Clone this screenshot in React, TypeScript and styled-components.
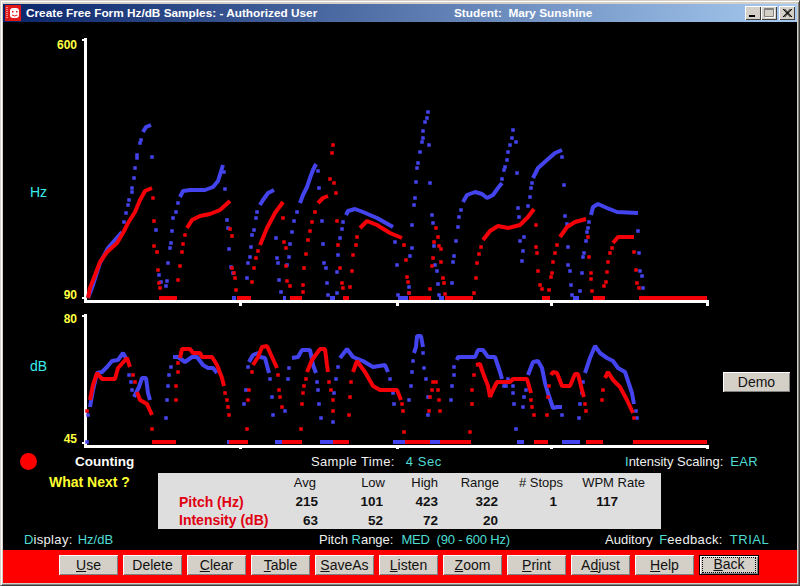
import React from "react";
import styled, { createGlobalStyle } from "styled-components";

const GlobalStyle = createGlobalStyle`
  html, body { margin: 0; padding: 0; background: #000; }
  body { font-family: "Liberation Sans", Arial, sans-serif; }
`;

const BLUE = "#4444ee";
const RED = "#f40008";
const CYAN = "#4fdcd4";

type Trace = { lines: string[]; bars: string[]; dots: string };

const hzBlue: Trace = {
  lines: [
    "88,298 93,285 100,263 108,248 115,240 122,232",
    "143,132 146,127 151,125",
    "180,197 183,191 190,190 205,190 213,187 218,181 223,165",
    "260,205 263,200 268,193 274,190",
    "300,203 303,195 307,187 310,178 313,170 316,164",
    "346,215 348,211 355,209 363,212 377,218 393,227",
    "463,202 467,195 475,192 482,194 487,198 493,195 498,188 502,183",
    "533,178 538,168 547,160 555,153 562,150",
    "591,215 593,207 598,204 607,208 617,212 638,213",
  ],
  bars: ["232,298 236,298", "283,298 286,298", "330,298 335,298", "398,298 408,298", "439,298 444,298", "573,298 579,298"],
  dots:
    "124,222 126,213 128,205 129,200 132,192 132,188 134,178 135,168 137,158 137,155 140,143 141,140 " +
    "152,157 156,230 159,275 161,282 166,286 167,281 168,263 170,248 171,243 172,231 173,218 176,212 178,203 " +
    "224,172 225,189 227,220 228,228 229,249 231,267 233,273 247,278 248,263 250,257 251,247 252,235 254,230 256,218 257,212 " +
    "276,238 277,258 278,263 279,280 281,292 287,265 289,257 290,244 292,232 294,221 297,212 " +
    "318,171 319,188 322,221 323,244 324,263 326,268 327,283 328,295 337,293 337,272 338,255 340,238 342,229 343,222 " +
    "395,242 397,265 398,295 409,287 409,293 410,256 412,248 412,225 414,205 415,198 416,182 417,168 418,163 420,152 422,142 423,138 423,131 425,122 427,118 428,112 " +
    "429,145 430,183 432,215 433,223 434,246 435,265 437,271 438,284 439,295 452,283 453,262 454,256 456,241 458,227 459,217 461,210 " +
    "502,179 504,170 505,167 507,160 508,152 510,145 512,138 513,130 516,142 517,173 518,208 519,217 520,241 524,237 523,251 522,261 " +
    "528,206 530,197 531,188 532,183 562,157 564,185 565,216 567,224 568,247 568,265 570,271 571,285 572,295 " +
    "580,291 582,273 583,257 584,253 586,241 587,232 588,228 589,222 638,231 639,253 640,271 642,276 643,288",
};

const hzRed: Trace = {
  lines: [
    "88,298 90,288 95,275 100,262 107,252 117,243 123,233 128,223 135,212 140,200 145,191 152,188",
    "187,228 192,220 200,216 210,214 220,210 230,201",
    "260,245 267,228 275,213 283,202",
    "318,203 323,198 328,196",
    "360,228 367,221 377,225 390,233 402,238",
    "483,240 490,231 498,226 508,228 520,225 528,217 534,209",
    "560,237 567,227 575,222 586,219",
    "613,243 618,237 634,237",
  ],
  bars: [
    "159,298 177,298", "237,298 251,298", "290,298 302,298", "343,298 349,298", "409,298 431,298",
    "445,298 473,298", "542,298 550,298", "593,298 605,298", "639,298 707,298",
  ],
  dots:
    "153,198 154,221 154,246 157,252 158,270 159,283 160,288 178,280 180,266 182,252 183,244 185,235 " +
    "230,229 232,236 232,268 234,273 235,278 236,290 252,282 254,268 256,258 258,251 " +
    "283,218 284,242 286,248 286,266 287,281 290,286 303,292 303,285 304,268 306,254 308,240 310,231 312,222 315,212 " +
    "332,153 333,145 330,179 334,183 336,193 337,221 338,245 340,268 342,283 343,288 " +
    "350,287 352,271 353,255 356,245 357,237 404,245 406,260 407,277 408,282 409,293 " +
    "430,289 432,266 433,258 434,242 436,228 438,237 439,246 441,249 441,262 443,278 444,283 445,294 " +
    "474,293 476,278 477,263 479,254 481,247 536,225 536,247 537,253 538,271 540,285 542,289 " +
    "549,290 551,277 552,273 553,262 555,253 557,245 588,237 589,257 591,273 591,279 592,291 " +
    "604,286 606,282 607,272 608,262 610,253 612,248 634,252 636,270 637,283 639,288",
};

const dbBlue: Trace = {
  lines: [
    "90,407 93,390 97,373 102,372 107,367 112,361 118,360 123,353 127,360",
    "134,397 139,387 142,378 146,378 148,393 150,400",
    "173,357 178,357 185,362 192,357 197,357 203,365 208,368 213,368 217,373",
    "249,362 253,355 258,353 260,357 265,358 269,373",
    "292,358 298,357 302,350 310,350 313,365 316,373",
    "340,358 347,349 353,357 363,361 373,367 385,365 388,372",
    "414,353 416,347 417,336 421,336 423,347",
    "457,360 458,357 475,357 478,350 483,350 488,357 495,357 500,372 502,379",
    "528,375 533,362 538,361 542,368 545,383 548,393 553,408 557,407 562,407",
    "585,373 590,358 595,346 600,353 607,358 613,361 618,368 625,372 632,393 634,404",
  ],
  bars: [
    "227,442 231,442", "275,442 282,442", "320,442 333,442", "393,442 405,442", "430,442 440,442",
    "517,442 524,442", "562,442 580,442",
  ],
  dots:
    "87,442 88,415 129,375 131,382 132,390 166,418 167,400 168,386 169,375 171,367 " +
    "244,404 246,390 248,367 270,379 272,397 273,415 285,411 288,379 289,368 " +
    "317,382 318,390 319,404 321,418 333,422 334,393 336,379 338,367 390,379 393,393 394,404 " +
    "409,400 411,386 412,372 413,361 423,353 424,368 426,379 428,397 428,415 " +
    "451,400 452,386 454,375 454,367 504,386 506,386 508,379 513,386 513,393 514,404 516,429 " +
    "523,407 524,397 526,390 562,415 579,418 580,404 582,393 583,382 636,411 637,418",
};

const dbRed: Trace = {
  lines: [
    "90,400 93,385 97,373 102,379 115,379 118,368 127,358 130,367",
    "137,392 140,400 147,404 152,415",
    "180,358 182,349 190,349 193,353 200,353 202,357 212,357 217,365 222,378 224,386",
    "253,365 258,357 262,347 267,346 272,357 277,368",
    "307,372 312,360 320,349 325,349 327,365 328,372",
    "353,372 357,361 365,372 373,386 380,390 397,390 401,400",
    "476,365 480,364 483,373 488,386 490,397 493,390 497,382 510,382 513,379 527,379 531,393",
    "551,375 553,372 557,373 562,386 570,386 575,374 578,374 582,390 584,397",
    "605,378 608,372 613,380 620,387 627,400 633,413",
  ],
  bars: [
    "152,442 176,442", "229,442 248,442", "282,442 302,442", "333,442 349,442", "405,442 430,442",
    "440,442 471,442", "534,442 548,442", "586,442 603,442", "633,442 707,442",
  ],
  dots:
    "87,411 133,375 135,382 152,429 176,400 176,386 178,372 178,363 225,393 227,400 228,407 229,415 " +
    "247,429 248,400 249,390 252,372 278,375 279,390 280,397 282,407 301,429 302,404 303,393 304,386 306,379 " +
    "329,382 331,390 333,400 333,411 349,415 350,397 351,382 402,404 403,411 404,432 " +
    "429,411 430,397 432,390 433,382 436,382 438,390 439,400 440,411 470,432 472,404 472,390 474,375 " +
    "531,400 532,407 534,415 547,415 548,397 549,386 585,404 586,411 602,400 603,390 634,418",
};

const Window = styled.div`
  width: 800px;
  height: 586px;
  box-sizing: border-box;
  display: flex;
  flex-direction: column;
  background: #d4d0c8;
  border-top: 1px solid #d4d0c8;
  border-left: 1px solid #d4d0c8;
  border-right: 1px solid #404040;
  border-bottom: 1px solid #404040;
  box-shadow: inset 1px 1px 0 #fff, inset -1px -1px 0 #808080;
  padding: 3px 2px 2px 2px;
  overflow: hidden;
`;

const TitleBar = styled.div`
  height: 18px;
  flex: none;
  display: flex;
  align-items: center;
  padding-left: 2px;
  background: linear-gradient(90deg, #0a246a 0%, #a6caf0 100%);
  color: #fff;
  font-size: 11.8px;
  font-weight: bold;
  white-space: nowrap;
`;

const TitleText = styled.span<{ $width: number }>`
  width: ${(p) => p.$width}px;
  margin-left: 5px;
  flex: none;
`;

const WindowButtons = styled.div`
  margin-left: auto;
  display: flex;
  margin-right: 2px;
`;

const WindowButton = styled.div<{ $gap?: number }>`
  width: 16px;
  height: 14px;
  margin-left: ${(p) => p.$gap ?? 0}px;
  background: #d4d0c8;
  box-shadow: inset 1px 1px 0 #fff, inset -1px -1px 0 #404040;
  display: flex;
  align-items: center;
  justify-content: center;
`;

const Canvas = styled.div`
  flex: 1;
  background: #000;
  display: flex;
  flex-direction: column;
  padding-top: 14px;
  min-height: 0;
`;

const ChartRow = styled.div`
  display: flex;
  flex: none;
`;

const AxisColumn = styled.div`
  width: 77px;
  flex: none;
  display: flex;
  flex-direction: column;
`;

const AxisValue = styled.div<{ $top: number }>`
  margin-top: ${(p) => p.$top}px;
  height: 14px;
  line-height: 14px;
  padding-right: 3px;
  text-align: right;
  color: #ffff40;
  font-size: 12px;
  font-weight: bold;
`;

const AxisUnit = styled.div<{ $top: number }>`
  margin-top: ${(p) => p.$top}px;
  height: 16px;
  line-height: 16px;
  padding-left: 27px;
  color: #38ecec;
  font-size: 14px;
`;

const ChartSvg = styled.svg`
  display: block;
  flex: none;
`;

const DemoSlot = styled.div`
  margin: 66px 0 0 11px;
`;

const Win95Button = styled.button<{ $w: number; $focused?: boolean }>`
  width: ${(p) => p.$w}px;
  height: 20px;
  padding: 0;
  border: none;
  flex: none;
  font-family: "Liberation Sans", Arial, sans-serif;
  font-size: 14px;
  color: #111;
  background: #d4d0c8;
  box-shadow: ${(p) =>
    p.$focused
      ? "inset 0 0 0 1px #000, inset 2px 2px 0 #fff, inset -2px -2px 0 #808080"
      : "inset 1px 1px 0 #fff, inset -1px -1px 0 #808080"};
`;

const FocusRing = styled.span`
  display: block;
  margin: 3px 4px;
  height: 14px;
  line-height: 13px;
  box-sizing: border-box;
  outline: 1px dotted #000;
`;

const InfoRow = styled.div<{ $h: number }>`
  display: flex;
  align-items: center;
  height: ${(p) => p.$h}px;
  flex: none;
  font-size: 13px;
  color: #f0f0f0;
  white-space: nowrap;
`;

const Cell = styled.div<{ $w: number }>`
  width: ${(p) => p.$w}px;
  flex: none;
  display: flex;
  align-items: center;
  white-space: pre;
`;

const RecordDot = styled.div`
  width: 17px;
  height: 17px;
  margin-left: 17px;
  border-radius: 50%;
  background: #f00;
`;

const Strong = styled.span<{ $color: string }>`
  color: ${(p) => p.$color};
  font-size: 13.5px;
  font-weight: bold;
`;

const Hot = styled.span`
  color: ${CYAN};
`;

const Wide = styled.span`
  letter-spacing: 0.35px;
`;

const Value = styled.span<{ $gap: number; $spacing?: number }>`
  color: ${CYAN};
  margin-left: ${(p) => p.$gap}px;
  letter-spacing: ${(p) => p.$spacing ?? 0}px;
`;

const MiddleRow = styled.div`
  display: flex;
  flex: none;
  height: 56px;
`;

const WhatNext = styled.div`
  width: 155px;
  flex: none;
  padding: 2px 0 0 46px;
  box-sizing: border-box;
  font-size: 14px;
  line-height: 15px;
  color: #ffff30;
  font-weight: bold;
`;

const StatsTable = styled.div`
  width: 503px;
  height: 56px;
  flex: none;
  box-sizing: border-box;
  padding-left: 21px;
  background: #dedede;
  display: grid;
  grid-template-columns: 89px 50px 67px 53px 61px 64px 82px;
  grid-template-rows: 19px 19px 18px;
  align-items: center;
  font-size: 13px;
  color: #111;
`;

const RowLabel = styled.div`
  color: #e00010;
  font-size: 14px;
  font-weight: bold;
  white-space: nowrap;
`;

const StatCell = styled.div<{ $bold?: boolean; $inset?: number }>`
  text-align: right;
  padding-right: ${(p) => p.$inset ?? 0}px;
  font-size: ${(p) => (p.$bold ? 13.5 : 13)}px;
  font-weight: ${(p) => (p.$bold ? "bold" : "normal")};
`;

const Toolbar = styled.div`
  height: 33px;
  flex: none;
  background: #f00;
  display: flex;
  align-items: flex-start;
  gap: 5px;
  padding: 5px 0 0 56px;
  box-sizing: border-box;
`;

const Mnemonic = styled.u`
  text-decoration: underline;
`;

function Trace({ trace, color }: { trace: Trace; color: string }) {
  const dots = trace.dots.split(" ").map((p) => p.split(",").map(Number));
  return (
    <g>
      {trace.lines.map((pts) => (
        <polyline key={pts} points={pts} fill="none" stroke={color} strokeWidth={4} strokeLinejoin="bevel" />
      ))}
      {trace.bars.map((pts) => (
        <polyline key={pts} points={pts} fill="none" stroke={color} strokeWidth={4} shapeRendering="crispEdges" />
      ))}
      {dots.map(([x, y], i) => (
        <rect key={i} x={x - 1.75} y={y - 1.75} width={3.5} height={3.5} fill={color} />
      ))}
    </g>
  );
}

function Axes({ top, bottom, left }: { top: number; bottom: number; left: number }) {
  return (
    <g fill="#fff" shapeRendering="crispEdges">
      <rect x={84} y={top} width={3} height={bottom - top + 3} />
      <rect x={left} y={top + 1} width={3} height={2} />
      <rect x={left} y={bottom - 3} width={3} height={2} />
      <rect x={84} y={bottom} width={624} height={3} />
      {[240, 397, 551, 707].map((x) => (
        <rect key={x} x={x - 1} y={bottom} width={3} height={6} />
      ))}
    </g>
  );
}

const buttons: { pre?: string; key: string; post: string }[] = [
  { key: "U", post: "se" },
  { pre: "Delete", key: "", post: "" },
  { key: "C", post: "lear" },
  { key: "T", post: "able" },
  { key: "S", post: "aveAs" },
  { key: "L", post: "isten" },
  { key: "Z", post: "oom" },
  { key: "P", post: "rint" },
  { pre: "A", key: "d", post: "just" },
  { key: "H", post: "elp" },
];

export default function App() {
  return (
    <Window>
      <GlobalStyle />
      <TitleBar>
        <svg width="16" height="16" viewBox="0 0 16 16">
          <rect width="16" height="16" fill="#e01818" />
          <rect x="5" y="3" width="9" height="10" rx="3" fill="#fff" />
          <rect x="7" y="6" width="1.5" height="1.5" fill="#e01818" />
          <rect x="11" y="6" width="1.5" height="1.5" fill="#e01818" />
          <path d="M7 10 Q9.5 12 12.5 10" stroke="#e01818" fill="none" />
          <path d="M2 2v12" stroke="#fff" strokeDasharray="1 1" />
        </svg>
        <TitleText $width={428}>Create Free Form Hz/dB Samples: - Authorized User</TitleText>
        <span>Student:&nbsp; Mary Sunshine</span>
        <WindowButtons>
          <WindowButton>
            <svg width="16" height="14" viewBox="0 0 16 14">
              <rect x="4" y="9" width="6" height="2" fill="#000" />
            </svg>
          </WindowButton>
          <WindowButton>
            <svg width="16" height="14" viewBox="0 0 16 14">
              <path d="M3.5 2.5h9v8h-9z M3.5 3.5h9" fill="none" stroke="#808080" />
              <path d="M4 11.5h9.5V3.5" fill="none" stroke="#fff" />
            </svg>
          </WindowButton>
          <WindowButton $gap={2}>
            <svg width="16" height="14" viewBox="0 0 16 14">
              <path d="M4 3l7.5 8M5.5 3l7.5 8M11.5 3L4 11M13 3l-7.5 8" stroke="#000" fill="none" />
            </svg>
          </WindowButton>
        </WindowButtons>
      </TitleBar>

      <Canvas>
        <ChartRow>
          <AxisColumn>
            <AxisValue $top={2}>600</AxisValue>
            <AxisUnit $top={132}>Hz</AxisUnit>
            <AxisValue $top={88}>90</AxisValue>
          </AxisColumn>
          <ChartSvg width="632" height="270" viewBox="80 36 632 270">
            <Axes top={38} bottom={300} left={82} />
            <Trace trace={hzBlue} color={BLUE} />
            <Trace trace={hzRed} color={RED} />
          </ChartSvg>
        </ChartRow>

        <ChartRow>
          <AxisColumn>
            <AxisValue $top={6}>80</AxisValue>
            <AxisUnit $top={32}>dB</AxisUnit>
            <AxisValue $top={58}>45</AxisValue>
          </AxisColumn>
          <ChartSvg width="632" height="143" viewBox="80 306 632 143">
            <Axes top={314} bottom={445} left={82} />
            <Trace trace={dbBlue} color={BLUE} />
            <Trace trace={dbRed} color={RED} />
          </ChartSvg>
          <DemoSlot>
            <Win95Button $w={67}>Demo</Win95Button>
          </DemoSlot>
        </ChartRow>

        <InfoRow $h={24}>
          <Cell $w={72}>
            <RecordDot />
          </Cell>
          <Cell $w={236}>
            <Strong $color="#fff">Counting</Strong>
          </Cell>
          <Cell $w={314}>
            <Wide>Sample Time:</Wide>
            <Value $gap={11} $spacing={0.6}>4 Sec</Value>
          </Cell>
          <Cell $w={170}>
            <Hot>I</Hot>ntensity Scaling:<Value $gap={7} $spacing={0.3}>EAR</Value>
          </Cell>
        </InfoRow>

        <MiddleRow>
          <WhatNext>What Next ?</WhatNext>
          <StatsTable>
            <span />
            <StatCell $inset={2}>Avg</StatCell>
            <StatCell>Low</StatCell>
            <StatCell>High</StatCell>
            <StatCell>Range</StatCell>
            <StatCell># Stops</StatCell>
            <StatCell>WPM Rate</StatCell>

            <RowLabel>Pitch (Hz)</RowLabel>
            <StatCell $bold>215</StatCell>
            <StatCell $bold $inset={2}>101</StatCell>
            <StatCell $bold>423</StatCell>
            <StatCell $bold $inset={1}>322</StatCell>
            <StatCell $bold $inset={6}>1</StatCell>
            <StatCell $bold $inset={27}>117</StatCell>

            <RowLabel>Intensity (dB)</RowLabel>
            <StatCell $bold>63</StatCell>
            <StatCell $bold $inset={2}>52</StatCell>
            <StatCell $bold>72</StatCell>
            <StatCell $bold $inset={1}>20</StatCell>
          </StatsTable>
        </MiddleRow>

        <InfoRow $h={21}>
          <Cell $w={316}>
            <Value $gap={21}>D</Value>
            <Wide>isplay:</Wide>
            <Value $gap={5}>Hz/dB</Value>
          </Cell>
          <Cell $w={286}>
            Pitch <Hot>R</Hot>ange:
            <Value $gap={8} $spacing={-0.2}>MED  (90 - 600 Hz)</Value>
          </Cell>
          <Cell $w={190}>
            Auditory <Value $gap={3}>F</Value>
            <Wide>eedback:</Wide>
            <Value $gap={7} $spacing={0.5}>TRIAL</Value>
          </Cell>
        </InfoRow>

        <Toolbar>
          {buttons.map((b) => (
            <Win95Button $w={59} key={b.key + b.post + (b.pre ?? "")}>
              {b.pre}
              {b.key && <Mnemonic>{b.key}</Mnemonic>}
              {b.post}
            </Win95Button>
          ))}
          <Win95Button $w={60} $focused>
            <FocusRing>
              <Mnemonic>B</Mnemonic>ack
            </FocusRing>
          </Win95Button>
        </Toolbar>
      </Canvas>
    </Window>
  );
}
